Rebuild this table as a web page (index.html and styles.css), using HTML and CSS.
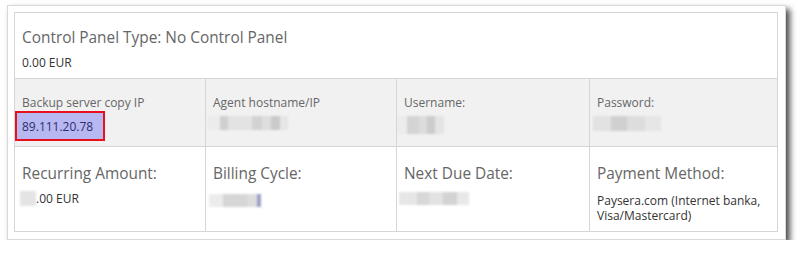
FILE: index.html
```html
<!DOCTYPE html>
<html>
<head>
<meta charset="utf-8">
<link rel="stylesheet" href="styles.css">
</head>
<body>
<div class="frame">
  <div class="grid">
    <div class="cell wide">
      <div class="title">Control Panel Type: No Control Panel</div>
      <div class="value">0.00 EUR</div>
    </div>
    <div class="cell shade">
      <div class="label">Backup server copy IP</div>
      <div class="ip">89.111.20.78</div>
    </div>
    <div class="cell shade">
      <div class="label">Agent hostname/IP</div>
      <div class="blur b-agent"></div>
    </div>
    <div class="cell shade">
      <div class="label">Username:</div>
      <div class="blur b-user"></div>
    </div>
    <div class="cell shade">
      <div class="label">Password:</div>
      <div class="blur b-pass"></div>
    </div>
    <div class="cell low">
      <div class="title">Recurring Amount:</div>
      <div class="value amount"><span class="blur b-amt"></span>.00 EUR</div>
    </div>
    <div class="cell low">
      <div class="title">Billing Cycle:</div>
      <div class="value"><span class="blur b-cycle"></span></div>
    </div>
    <div class="cell low">
      <div class="title">Next Due Date:</div>
      <div class="value"><span class="blur b-due"></span></div>
    </div>
    <div class="cell low">
      <div class="title">Payment Method:</div>
      <div class="value pay">Paysera.com (Internet banka, Visa/Mastercard)</div>
    </div>
  </div>
</div>
</body>
</html>
```

FILE: styles.css
```css
html, body {
  margin: 0;
  padding: 0;
  background: #ffffff;
}
body {
  font-family: "Open Sans", "Liberation Sans", sans-serif;
}
.frame {
  box-sizing: border-box;
  margin: 5px 0 0 7px;
  width: 779px;
  height: 235px;
  border: 1px solid #d9d9d9;
  padding: 6px;
  background: #fff;
  box-shadow: 4px 4px 6px rgba(0, 0, 0, 0.7);
}
.grid {
  box-sizing: border-box;
  width: 764px;
  height: 220px;
  border: 1px solid #d6d6d6;
  background: #d6d6d6;
  display: grid;
  grid-template-columns: 190px 190px 192px 187px;
  grid-template-rows: 65px 67px 84px;
  gap: 1px;
}
.cell {
  background: #fff;
  padding: 14px 7px 0 7px;
  overflow: hidden;
}
.cell.wide {
  grid-column: 1 / 5;
}
.cell.low {
  padding-top: 16px;
}
.cell.shade {
  background: #f1f1f1;
  padding-top: 15px;
}
.title {
  font-size: 15.4px;
  line-height: 21px;
  color: #666;
}
.value {
  margin-top: 7px;
  font-size: 12px;
  line-height: 16px;
  color: #333;
}
.label {
  font-size: 12px;
  line-height: 17px;
  color: #666;
}
.ip {
  display: inline-block;
  margin: 0 0 0 -7px;
  padding: 5px 10px 4px 5px;
  border: 2px solid #e8101c;
  background: #b7b7f2;
  color: #2e2e6e;
  font-size: 12px;
  line-height: 17px;
}
.blur {
  display: inline-block;
  filter: blur(1px);
  vertical-align: top;
}
.b-agent {
  margin: 5px 0 0 -5px;
  width: 80px;
  height: 14px;
  background: linear-gradient(90deg, #ececec 0 12px, #cfcfcf 12px 20px, #e3e3e3 20px 44px, #d2d2d2 44px 54px, #dedede 54px 63px, #cacaca 63px 72px, #e6e6e6 72px);
}
.b-user {
  margin: 5px 0 0 -7px;
  width: 47px;
  height: 18px;
  background: linear-gradient(90deg, #ececec 0 10px, #d4d4d4 10px 22px, #dcdcdc 22px 30px, #cccccc 30px 38px, #e4e4e4 38px);
}
.b-pass {
  margin: 5px 0 0 -4px;
  width: 68px;
  height: 15px;
  background: linear-gradient(90deg, #e2e2e2 0 18px, #d0d0d0 18px 34px, #dddddd 34px 52px, #e6e6e6 52px);
}
.amount {
  margin-left: -2px;
}
.b-amt {
  width: 16px;
  height: 15px;
  background: #e4e4e4;
}
.b-cycle {
  margin: 3px 0 0 -4px;
  width: 52px;
  height: 13px;
  background: linear-gradient(90deg, #ececec 0 14px, #d6d6d6 14px 38px, #dddddd 38px 48px, #9aa0c8 48px);
}
.b-due {
  margin: 1px 0 0 -5px;
  width: 70px;
  height: 13px;
  background: linear-gradient(90deg, #e6e6e6 0 18px, #d7d7d7 18px 30px, #e2e2e2 30px 44px, #d3d3d3 44px 58px, #e8e8e8 58px);
}
.pay {
  line-height: 15px;
  padding-top: 2px;
}
```
